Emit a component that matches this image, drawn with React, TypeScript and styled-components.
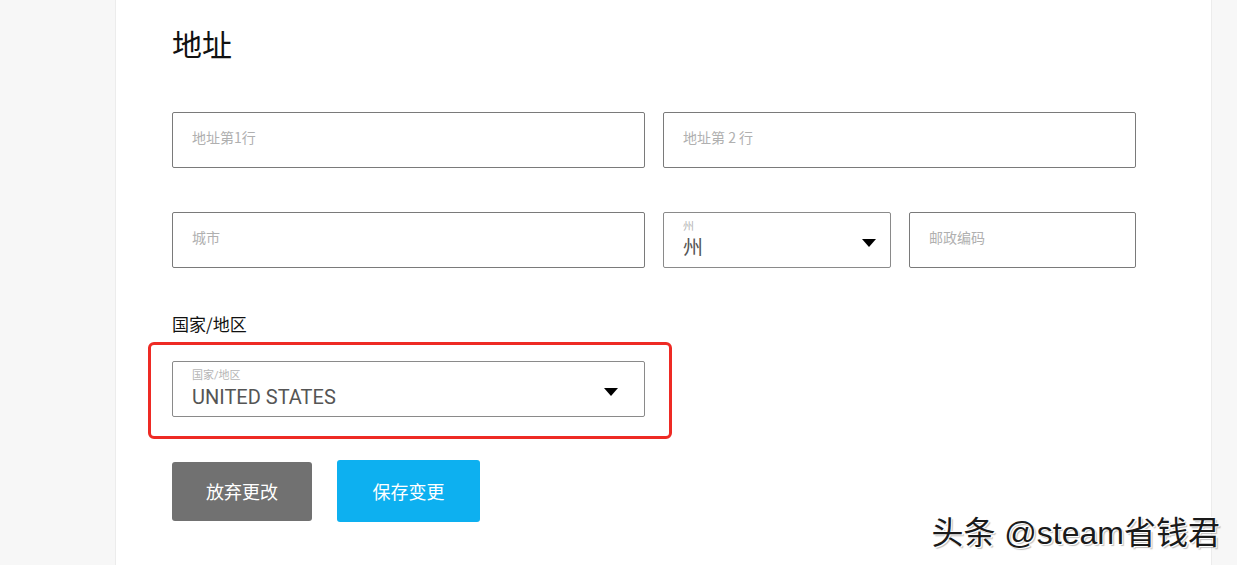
import styled, { createGlobalStyle } from 'styled-components'

const GlobalStyle = createGlobalStyle`
  html, body {
    margin: 0;
    padding: 0;
    background: #f7f7f7;
    font-family: Roboto, "Noto Sans CJK SC", sans-serif;
  }
`

type FieldProps = {
  label: string
  value?: string
  caretGap: number
}

const TextField = ({ label }: { label: string }) => (
  <InputBox>
    <Placeholder>{label}</Placeholder>
  </InputBox>
)

const SelectField = ({ label, value, caretGap }: FieldProps) => (
  <SelectBox $caretGap={caretGap}>
    <FieldText>
      <SmallLabel>{label}</SmallLabel>
      <SelectValue>{value}</SelectValue>
    </FieldText>
    <Caret viewBox="0 0 14 8">
      <path d="M0 0h14L7 8z" fill="#000" />
    </Caret>
  </SelectBox>
)

export default function App() {
  return (
    <>
      <GlobalStyle />
      <Page>
        <Panel>
          <Title>地址</Title>
          <RowTwo>
            <TextField label="地址第1行" />
            <TextField label="地址第 2 行" />
          </RowTwo>
          <RowThree>
            <TextField label="城市" />
            <SelectField label="州" value="州" caretGap={14} />
            <TextField label="邮政编码" />
          </RowThree>
          <SectionLabel>国家/地区</SectionLabel>
          <CountryWrap>
            <SelectField label="国家/地区" value="UNITED STATES" caretGap={26} />
            <Highlight />
          </CountryWrap>
          <Actions>
            <Button $tone="gray">放弃更改</Button>
            <Button $tone="blue">保存变更</Button>
          </Actions>
        </Panel>
        <Watermark>头条 @steam省钱君</Watermark>
      </Page>
    </>
  )
}

//style
const Page = styled.div`
  position: relative;
  height: 565px;
  overflow: hidden;
  padding-left: 115px;
`

const Panel = styled.div`
  width: 1097px;
  height: 565px;
  box-sizing: border-box;
  background: #fff;
  border-left: 1px solid #ececec;
  border-right: 1px solid #ececec;
  padding: 25px 0 0 56px;
`

const Title = styled.h2`
  margin: 0 0 51px;
  font-family: "Noto Sans CJK SC", sans-serif;
  font-size: 30px;
  font-weight: 400;
  line-height: 36px;
  color: #111;
`

const RowTwo = styled.div`
  display: grid;
  grid-template-columns: 473px 473px;
  column-gap: 18px;
  margin-bottom: 44px;
`

const RowThree = styled.div`
  display: grid;
  grid-template-columns: 473px 228px 227px;
  column-gap: 18px;
  margin-bottom: 45px;
`

const InputBox = styled.div`
  height: 56px;
  box-sizing: border-box;
  border: 1px solid #7a7a7a;
  border-radius: 2px;
  display: flex;
  align-items: center;
  padding: 0 19px 6px;
`

const Placeholder = styled.span`
  font-family: "Noto Sans CJK SC", sans-serif;
  font-size: 14px;
  color: #b0b0b0;
`

const SelectBox = styled.div<{ $caretGap: number }>`
  height: 56px;
  box-sizing: border-box;
  border: 1px solid #8a8a8a;
  border-radius: 2px;
  display: flex;
  align-items: center;
  justify-content: space-between;
  padding: 0 ${p => p.$caretGap}px 0 19px;
`

const FieldText = styled.div`
  display: flex;
  flex-direction: column;
  padding-top: 2px;
`

const SmallLabel = styled.span`
  font-family: Roboto, "Noto Sans CJK SC", sans-serif;
  font-size: 11px;
  line-height: 13px;
  color: #b5b5b5;
`

const SelectValue = styled.span`
  font-family: Roboto, "Noto Sans CJK SC", sans-serif;
  font-size: 20px;
  line-height: 30px;
  color: #555;
`

const Caret = styled.svg`
  width: 14px;
  height: 8px;
  margin-top: 6px;
`

const SectionLabel = styled.div`
  font-family: "Noto Sans CJK SC", sans-serif;
  font-size: 17px;
  line-height: 22px;
  color: #111;
  margin-bottom: 26px;
`

const CountryWrap = styled.div`
  position: relative;
  width: 473px;
  margin-bottom: 43px;
`

const Highlight = styled.div`
  position: absolute;
  left: -24px;
  right: -27px;
  top: -19px;
  bottom: -22px;
  border: 3px solid #ee2a24;
  border-radius: 6px;
  pointer-events: none;
`

const Actions = styled.div`
  display: flex;
  align-items: center;
  gap: 25px;
`

const Button = styled.button<{ $tone: 'gray' | 'blue' }>`
  border: none;
  border-radius: 3px;
  color: #fff;
  font-family: "Noto Sans CJK SC", sans-serif;
  font-size: 18px;
  cursor: pointer;
  width: ${p => (p.$tone === 'gray' ? '140px' : '143px')};
  height: ${p => (p.$tone === 'gray' ? '59px' : '62px')};
  background: ${p => (p.$tone === 'gray' ? '#717171' : '#0db0f0')};
`

const Watermark = styled.div`
  position: absolute;
  right: 17px;
  bottom: 12px;
  font-family: "Liberation Sans", "Noto Sans CJK SC", sans-serif;
  font-size: 32px;
  line-height: 40px;
  color: #1a1a1a;
  text-shadow: 1px 1px 0 #fff, -1px -1px 0 #fff, 2px 2px 1px rgba(0, 0, 0, 0.25);
`
